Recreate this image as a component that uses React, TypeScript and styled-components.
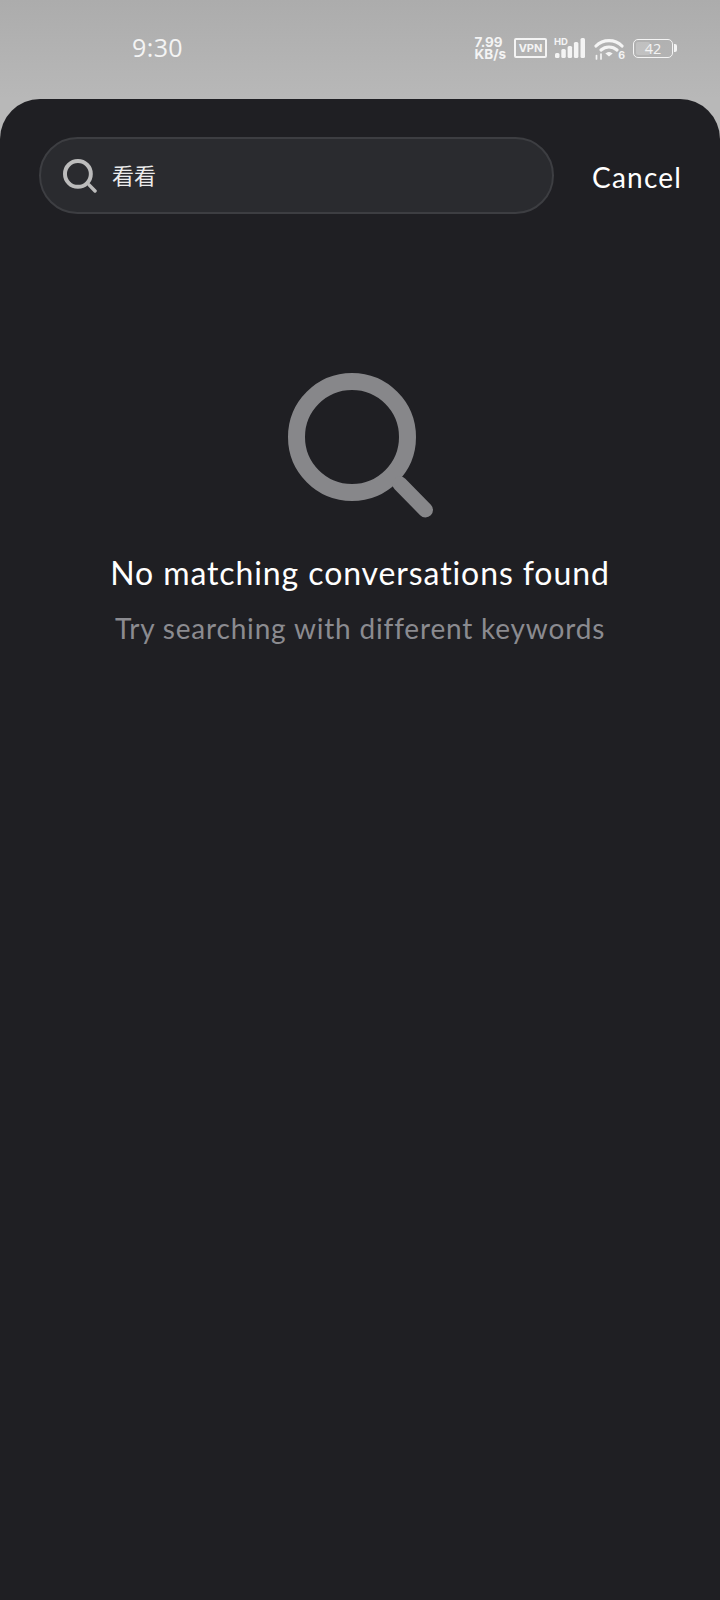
import styled, { createGlobalStyle } from 'styled-components';

const GlobalStyle = createGlobalStyle`
  html, body {
    margin: 0;
    padding: 0;
    background: #b3b3b3;
  }
  * {
    box-sizing: border-box;
  }
`;

const Screen = styled.div`
  width: 720px;
  height: 1600px;
  display: flex;
  flex-direction: column;
  overflow: hidden;
  background: linear-gradient(#acacac, #b8b8b8 99px);
  font-family: Lato, 'Noto Sans CJK SC', sans-serif;
`;

const StatusBar = styled.div`
  height: 99px;
  flex-shrink: 0;
  display: flex;
  align-items: center;
  padding: 0 43px 3px 132px;
  color: #f4f4f4;
`;

const Clock = styled.span`
  font-size: 25px;
  font-family: 'Open Sans', sans-serif;
  letter-spacing: 0.4px;
  margin-right: auto;
  margin-top: -2px;
`;

const Speed = styled.div`
  display: flex;
  flex-direction: column;
  align-items: flex-start;
  font-family: Inter, sans-serif;
  font-weight: 700;
  font-size: 13.5px;
  line-height: 12px;
  margin-right: 8px;
`;

const VpnBadge = styled.span`
  width: 33px;
  height: 20px;
  border: 2px solid #f4f4f4;
  border-radius: 2px;
  display: flex;
  align-items: center;
  justify-content: center;
  font-family: Inter, sans-serif;
  font-weight: 700;
  font-size: 11px;
  margin-right: 8px;
`;

const SignalWrap = styled.div`
  position: relative;
  width: 30px;
  height: 20px;
  margin-right: 9px;
`;

const HdMark = styled.span`
  position: absolute;
  left: -1px;
  top: 0;
  font-family: Inter, sans-serif;
  font-weight: 700;
  font-size: 9.5px;
  line-height: 8px;
`;

const WifiWrap = styled.div`
  position: relative;
  width: 30px;
  height: 22px;
  margin: 2px 9px 0 0;
`;

const WifiNumber = styled.span`
  position: absolute;
  right: -1px;
  bottom: 0;
  font-family: Inter, sans-serif;
  font-weight: 700;
  font-size: 10.5px;
  line-height: 9px;
`;

const Battery = styled.div`
  display: flex;
  align-items: center;
  gap: 1px;
`;

const BatteryBody = styled.div`
  position: relative;
  width: 40px;
  height: 19px;
  padding: 2px;
  border: 1.5px solid #f4f4f4;
  border-radius: 5px;
`;

const BatteryFill = styled.div<{ $level: number }>`
  width: ${({ $level }) => $level}%;
  height: 100%;
  border-radius: 2px;
  background: rgba(255, 255, 255, 0.2);
`;

const BatteryLevel = styled.span`
  position: absolute;
  inset: 0;
  display: flex;
  align-items: center;
  justify-content: center;
  font-family: 'Open Sans', sans-serif;
  font-size: 14.5px;
`;

const BatteryCap = styled.div`
  width: 3px;
  height: 8px;
  border-radius: 0 2px 2px 0;
  background: #f4f4f4;
`;

const Panel = styled.main`
  flex: 1;
  display: flex;
  flex-direction: column;
  background: #1f1f23;
  border-radius: 40px 40px 0 0;
  padding: 38px 39px 0;
`;

const SearchRow = styled.div`
  display: flex;
  align-items: center;
  justify-content: space-between;
`;

const SearchField = styled.div`
  width: 515px;
  height: 77px;
  display: flex;
  align-items: center;
  gap: 15px;
  padding: 0 22px;
  background: #2a2b2f;
  border: 2px solid #3d3e42;
  border-radius: 39px;
`;

const Query = styled.span`
  font-family: 'Noto Sans CJK SC', sans-serif;
  font-size: 22px;
  line-height: 30px;
  color: #ececec;
  margin-top: -3px;
`;

const CancelButton = styled.button`
  border: 0;
  padding: 2px 0 0;
  margin-right: -1px;
  background: none;
  font-family: Lato, sans-serif;
  font-size: 28px;
  letter-spacing: 1.2px;
  color: #fff;
`;

const EmptyState = styled.section`
  display: flex;
  flex-direction: column;
  align-items: center;
  margin-top: 159px;
`;

const EmptyIcon = styled.div`
  display: flex;
  margin-left: 1px;
`;

const EmptyTitle = styled.h2`
  margin: 33px 0 0;
  font-size: 32px;
  line-height: 42px;
  font-weight: 400;
  letter-spacing: 0.9px;
  color: #fff;
  white-space: nowrap;
`;

const EmptyHint = styled.p`
  margin: 15px 0 0;
  font-size: 28px;
  line-height: 38px;
  letter-spacing: 0.82px;
  color: #8b8b90;
  white-space: nowrap;
`;

const SearchGlyph = ({ size, color }: { size: number; color: string }) => (
  <svg width={size} height={size} viewBox="0 0 146 146" fill="none" stroke={color} strokeLinecap="round">
    <circle cx="64" cy="64" r="55.5" strokeWidth="17" />
    <path d="M112 111 L137.5 137" strokeWidth="15" />
  </svg>
);

const App = () => {
  return (
    <Screen>
      <GlobalStyle />
      <StatusBar>
        <Clock>9:30</Clock>
        <Speed>
          <span>7.99</span>
          <span>KB/s</span>
        </Speed>
        <VpnBadge>VPN</VpnBadge>
        <SignalWrap>
          <HdMark>HD</HdMark>
          <svg width="30" height="20" viewBox="0 0 30 20" fill="#f4f4f4">
            <rect x="0" y="15" width="4.5" height="5" rx="1.5" />
            <rect x="6.3" y="11" width="4.5" height="9" rx="1.5" />
            <rect x="12.6" y="8" width="4.5" height="12" rx="1.5" />
            <rect x="18.9" y="4" width="4.5" height="16" rx="1.5" />
            <rect x="25.5" y="0" width="4.5" height="20" rx="1.5" />
          </svg>
        </SignalWrap>
        <WifiWrap>
          <svg width="30" height="22" viewBox="0 0 30 22" fill="none" stroke="#f4f4f4" strokeWidth="3.2" strokeLinecap="round">
            <path d="M2 8 C9 0.8 21 0.8 28 8" />
            <path d="M7 12 C11.5 8 18.5 8 23 12" />
            <path d="M12.5 15.5 L15 17.5 L17.5 15.5 C16 14.5 14 14.5 12.5 15.5 Z" fill="#f4f4f4" strokeWidth="1.4" />
            <path d="M2.5 21 V17.5 M7 21 V16" strokeWidth="1.7" />
          </svg>
          <WifiNumber>6</WifiNumber>
        </WifiWrap>
        <Battery>
          <BatteryBody>
            <BatteryFill $level={42} />
            <BatteryLevel>42</BatteryLevel>
          </BatteryBody>
          <BatteryCap />
        </Battery>
      </StatusBar>
      <Panel>
        <SearchRow>
          <SearchField>
            <SearchGlyph size={34} color="#bcbcbc" />
            <Query>看看</Query>
          </SearchField>
          <CancelButton>Cancel</CancelButton>
        </SearchRow>
        <EmptyState>
          <EmptyIcon>
            <SearchGlyph size={146} color="#87878a" />
          </EmptyIcon>
          <EmptyTitle>No matching conversations found</EmptyTitle>
          <EmptyHint>Try searching with different keywords</EmptyHint>
        </EmptyState>
      </Panel>
    </Screen>
  );
};

export default App;
